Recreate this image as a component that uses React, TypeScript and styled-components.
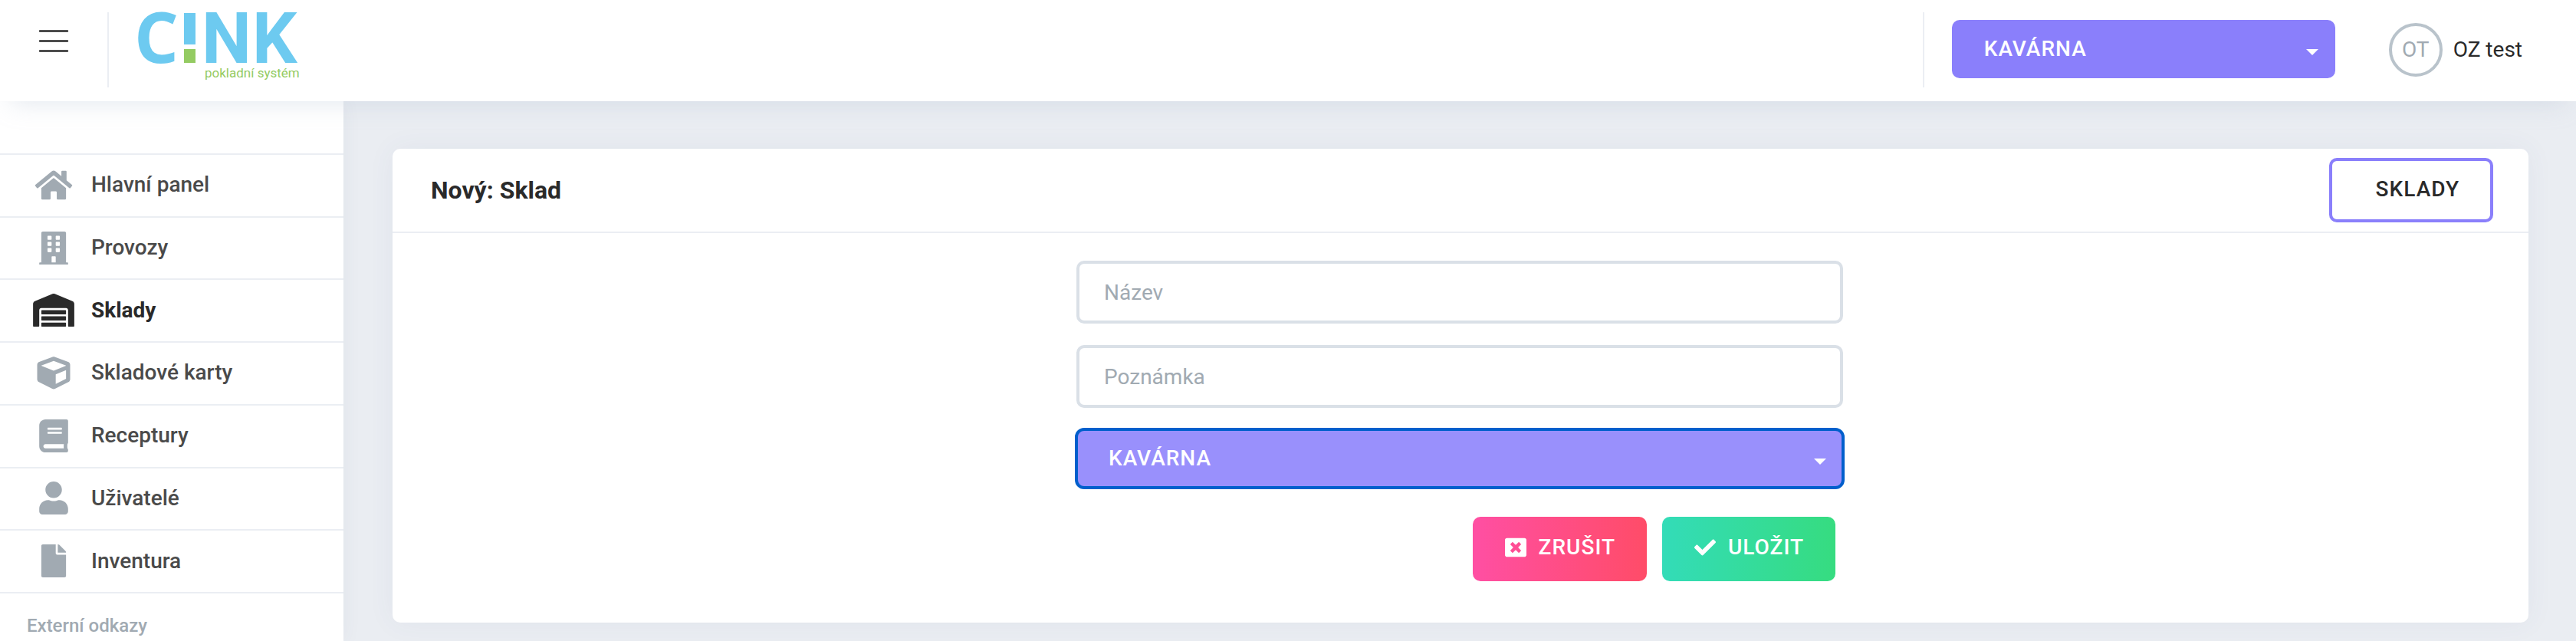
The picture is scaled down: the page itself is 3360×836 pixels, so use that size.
import React from 'react';
import styled, { createGlobalStyle, css } from 'styled-components';
import {
  FaHome,
  FaBuilding,
  FaWarehouse,
  FaCube,
  FaBook,
  FaUser,
  FaFile,
  FaWindowClose,
  FaCheck,
} from 'react-icons/fa';

const color = {
  page: '#eaedf2',
  line: '#ebeef3',
  primary: '#8a7ffb',
  primaryLight: '#9990fc',
  text: '#2a2a2a',
  menuText: '#4a4a4a',
  muted: '#a1aab2',
  field: '#dae0e7',
  focus: '#005fcc',
};

const GlobalStyle = createGlobalStyle`
  *, *::before, *::after { box-sizing: border-box; }
  body {
    margin: 0;
    background: ${color.page};
    color: ${color.text};
    font-family: Roboto, "Noto Sans", sans-serif;
    font-size: 28px;
    line-height: 42px;
  }
  button, input, select { font: inherit; color: inherit; }
`;

const Page = styled.div`
  display: flex;
  flex-direction: column;
  min-height: 100vh;
`;

const Header = styled.header`
  position: relative;
  z-index: 1;
  display: flex;
  align-items: flex-start;
  justify-content: space-between;
  height: 132px;
  padding-right: 70px;
  background: #fff;
  box-shadow: 0 16px 30px -14px rgba(170, 184, 204, 0.34);
`;

const HeaderGroup = styled.div`
  display: flex;
  align-items: flex-start;
`;

const HeaderDivider = styled.div`
  width: 2px;
  height: 98px;
  margin-top: 16px;
  background: ${color.line};
`;

const MenuToggle = styled.button`
  display: flex;
  justify-content: center;
  width: 140px;
  margin: 0;
  padding: 36px 0 0;
  border: 0;
  background: none;
`;

const LogoLink = styled.a`
  display: block;
  margin-left: 34px;
`;

const Logo = styled.svg`
  display: block;
  overflow: visible;
`;

const SelectWrap = styled.div<{ $header?: boolean }>`
  display: grid;
  align-items: center;
  ${({ $header }) =>
    $header &&
    css`
      width: 500px;
      margin: 26px 70px 0 36px;
    `}
  & > * {
    grid-area: 1 / 1;
  }
`;

const Select = styled.select<{ $focused?: boolean }>`
  appearance: none;
  width: 100%;
  height: 76px;
  padding: 0 60px 0 42px;
  border: 0;
  border-radius: 10px;
  background: ${({ $focused }) => ($focused ? color.primaryLight : color.primary)};
  color: #fff;
  font-weight: 500;
  letter-spacing: 1px;
  outline: ${({ $focused }) => ($focused ? `4px solid ${color.focus}` : 'none')};
  outline-offset: -2px;
`;

const Caret = styled.svg`
  justify-self: end;
  margin: 8px 22px 0 0;
  pointer-events: none;
`;

const Account = styled.a`
  display: flex;
  align-items: center;
  gap: 14px;
  margin-top: 30px;
  color: ${color.text};
  text-decoration: none;
`;

const Avatar = styled.span`
  display: flex;
  align-items: center;
  justify-content: center;
  width: 70px;
  height: 70px;
  border: 4px solid #b9c3cb;
  border-radius: 50%;
  color: ${color.muted};
`;

const Body = styled.div`
  display: flex;
  flex: 1;
`;

const Sidebar = styled.nav`
  flex: none;
  width: 448px;
  padding-top: 68px;
  background: #fff;
  box-shadow: 0 0 24px rgba(60, 80, 110, 0.06);
`;

const MenuList = styled.ul`
  display: grid;
  grid-auto-rows: 1fr;
  height: 574px;
  margin: 0;
  padding: 0;
  list-style: none;
  border-top: 2px solid ${color.line};
`;

const MenuItem = styled.li`
  border-bottom: 2px solid ${color.line};
`;

const MenuLink = styled.a<{ $active?: boolean }>`
  display: flex;
  align-items: center;
  gap: 22px;
  height: 100%;
  padding: 0 43px 1px;
  color: ${({ $active }) => ($active ? color.text : color.menuText)};
  font-weight: ${({ $active }) => ($active ? 700 : 500)};
  text-decoration: none;
  svg {
    width: 54px;
    height: 43px;
    color: ${({ $active }) => ($active ? color.text : color.muted)};
  }
`;

const MenuHeading = styled.h2`
  margin: 0;
  padding: 24px 35px 0;
  color: ${color.muted};
  font-size: 24px;
  font-weight: 500;
  line-height: 36px;
`;

const Main = styled.main`
  flex: 1;
  min-width: 0;
  padding: 62px 62px 24px 64px;
`;

const Card = styled.section`
  border-radius: 10px;
  background: #fff;
  box-shadow: 0 0 36px rgba(70, 80, 140, 0.06);
`;

const CardHeader = styled.div`
  display: flex;
  align-items: center;
  justify-content: space-between;
  height: 110px;
  padding: 0 46px 0 50px;
  border-bottom: 2px solid ${color.line};
`;

const CardTitle = styled.h1`
  margin: 0;
  font-size: 32px;
  font-weight: 700;
  line-height: 42px;
`;

const OutlineLink = styled.a`
  height: 84px;
  padding: 16px 40px 0 57px;
  border: 4px solid ${color.primary};
  border-radius: 10px;
  color: ${color.text};
  font-weight: 500;
  letter-spacing: 1px;
  text-decoration: none;
`;

const CardBody = styled.div`
  padding: 36px 46px 54px 44px;
`;

const Form = styled.form`
  display: flex;
  flex-direction: column;
  gap: 28px;
  max-width: 1000px;
  margin: 0 auto;
`;

const TextInput = styled.input`
  width: 100%;
  height: 82px;
  padding: 0 32px;
  border: 4px solid ${color.field};
  border-radius: 10px;
  background: #fff;
  outline: none;
  &::placeholder {
    color: ${color.muted};
    opacity: 1;
  }
`;

const Actions = styled.div`
  display: flex;
  justify-content: flex-end;
  gap: 20px;
  padding: 10px 10px 0;
`;

const ActionButton = styled.button<{ $from: string; $to: string }>`
  display: flex;
  align-items: center;
  gap: 16px;
  height: 84px;
  padding: 0 41px 4px 42px;
  border: 0;
  border-radius: 10px;
  background: linear-gradient(to right, ${({ $from }) => $from}, ${({ $to }) => $to});
  color: #fff;
  font-weight: 500;
  letter-spacing: 1px;
`;

const menu = [
  { label: 'Hlavní panel', Icon: FaHome },
  { label: 'Provozy', Icon: FaBuilding },
  { label: 'Sklady', Icon: FaWarehouse, active: true },
  { label: 'Skladové karty', Icon: FaCube },
  { label: 'Receptury', Icon: FaBook },
  { label: 'Uživatelé', Icon: FaUser },
  { label: 'Inventura', Icon: FaFile },
];

type BranchSelectProps = { label: string; header?: boolean; focused?: boolean };

function BranchSelect({ label, header, focused }: BranchSelectProps) {
  return (
    <SelectWrap $header={header}>
      <Select aria-label={label} $focused={focused} defaultValue="kavarna">
        <option value="kavarna">KAVÁRNA</option>
      </Select>
      <Caret width="16" height="8" viewBox="0 0 16 8" aria-hidden="true">
        <path d="M0 0h16L8 8z" fill="#fff" />
      </Caret>
    </SelectWrap>
  );
}

export default function App() {
  return (
    <Page>
      <GlobalStyle />
      <Header>
        <HeaderGroup>
          <MenuToggle type="button" aria-label="Menu">
            <svg width="40" height="34" viewBox="0 0 40 34">
              <path
                d="M2 4.5h36M2 17.5h36M2 30.5h36"
                stroke={color.text}
                strokeWidth="2.4"
                strokeLinecap="round"
              />
            </svg>
          </MenuToggle>
          <HeaderDivider />
          <LogoLink href="#" aria-label="CINK pokladní systém">
            <Logo width="216" height="110" viewBox="0 0 216 110">
              <g fill="#6dcaf0" fontWeight="700">
                <text x="-1" y="82" fontSize="91" fontFamily="'Open Sans', 'Noto Sans', sans-serif">
                  C
                </text>
                <text x="87" y="82" fontSize="92" fontFamily="Roboto, sans-serif">
                  N
                </text>
                <text x="153" y="82" fontSize="92" fontFamily="Roboto, sans-serif">
                  K
                </text>
              </g>
              <rect x="64" y="17" width="15" height="41" fill="#6dcaf0" />
              <rect x="64" y="64" width="15" height="18" fill="#94cb62" />
              <text x="91" y="101" fill="#94cb62" fontFamily="Roboto, sans-serif" fontSize="17">
                pokladní systém
              </text>
            </Logo>
          </LogoLink>
        </HeaderGroup>
        <HeaderGroup>
          <HeaderDivider />
          <BranchSelect label="Provoz" header />
          <Account href="#">
            <Avatar>OT</Avatar>
            OZ test
          </Account>
        </HeaderGroup>
      </Header>
      <Body>
        <Sidebar>
          <MenuList>
            {menu.map(({ label, Icon, active }) => (
              <MenuItem key={label}>
                <MenuLink href="#" $active={active}>
                  <Icon aria-hidden="true" />
                  {label}
                </MenuLink>
              </MenuItem>
            ))}
          </MenuList>
          <MenuHeading>Externí odkazy</MenuHeading>
        </Sidebar>
        <Main>
          <Card>
            <CardHeader>
              <CardTitle>Nový: Sklad</CardTitle>
              <OutlineLink href="#">SKLADY</OutlineLink>
            </CardHeader>
            <CardBody>
              <Form onSubmit={(event) => event.preventDefault()}>
                <TextInput type="text" aria-label="Název" placeholder="Název" />
                <TextInput type="text" aria-label="Poznámka" placeholder="Poznámka" />
                <BranchSelect label="Provoz skladu" focused />
                <Actions>
                  <ActionButton type="button" $from="#ff4fa3" $to="#ff4c68">
                    <FaWindowClose aria-hidden="true" />
                    ZRUŠIT
                  </ActionButton>
                  <ActionButton type="submit" $from="#33dcb8" $to="#36dc80">
                    <FaCheck aria-hidden="true" />
                    ULOŽIT
                  </ActionButton>
                </Actions>
              </Form>
            </CardBody>
          </Card>
        </Main>
      </Body>
    </Page>
  );
}
